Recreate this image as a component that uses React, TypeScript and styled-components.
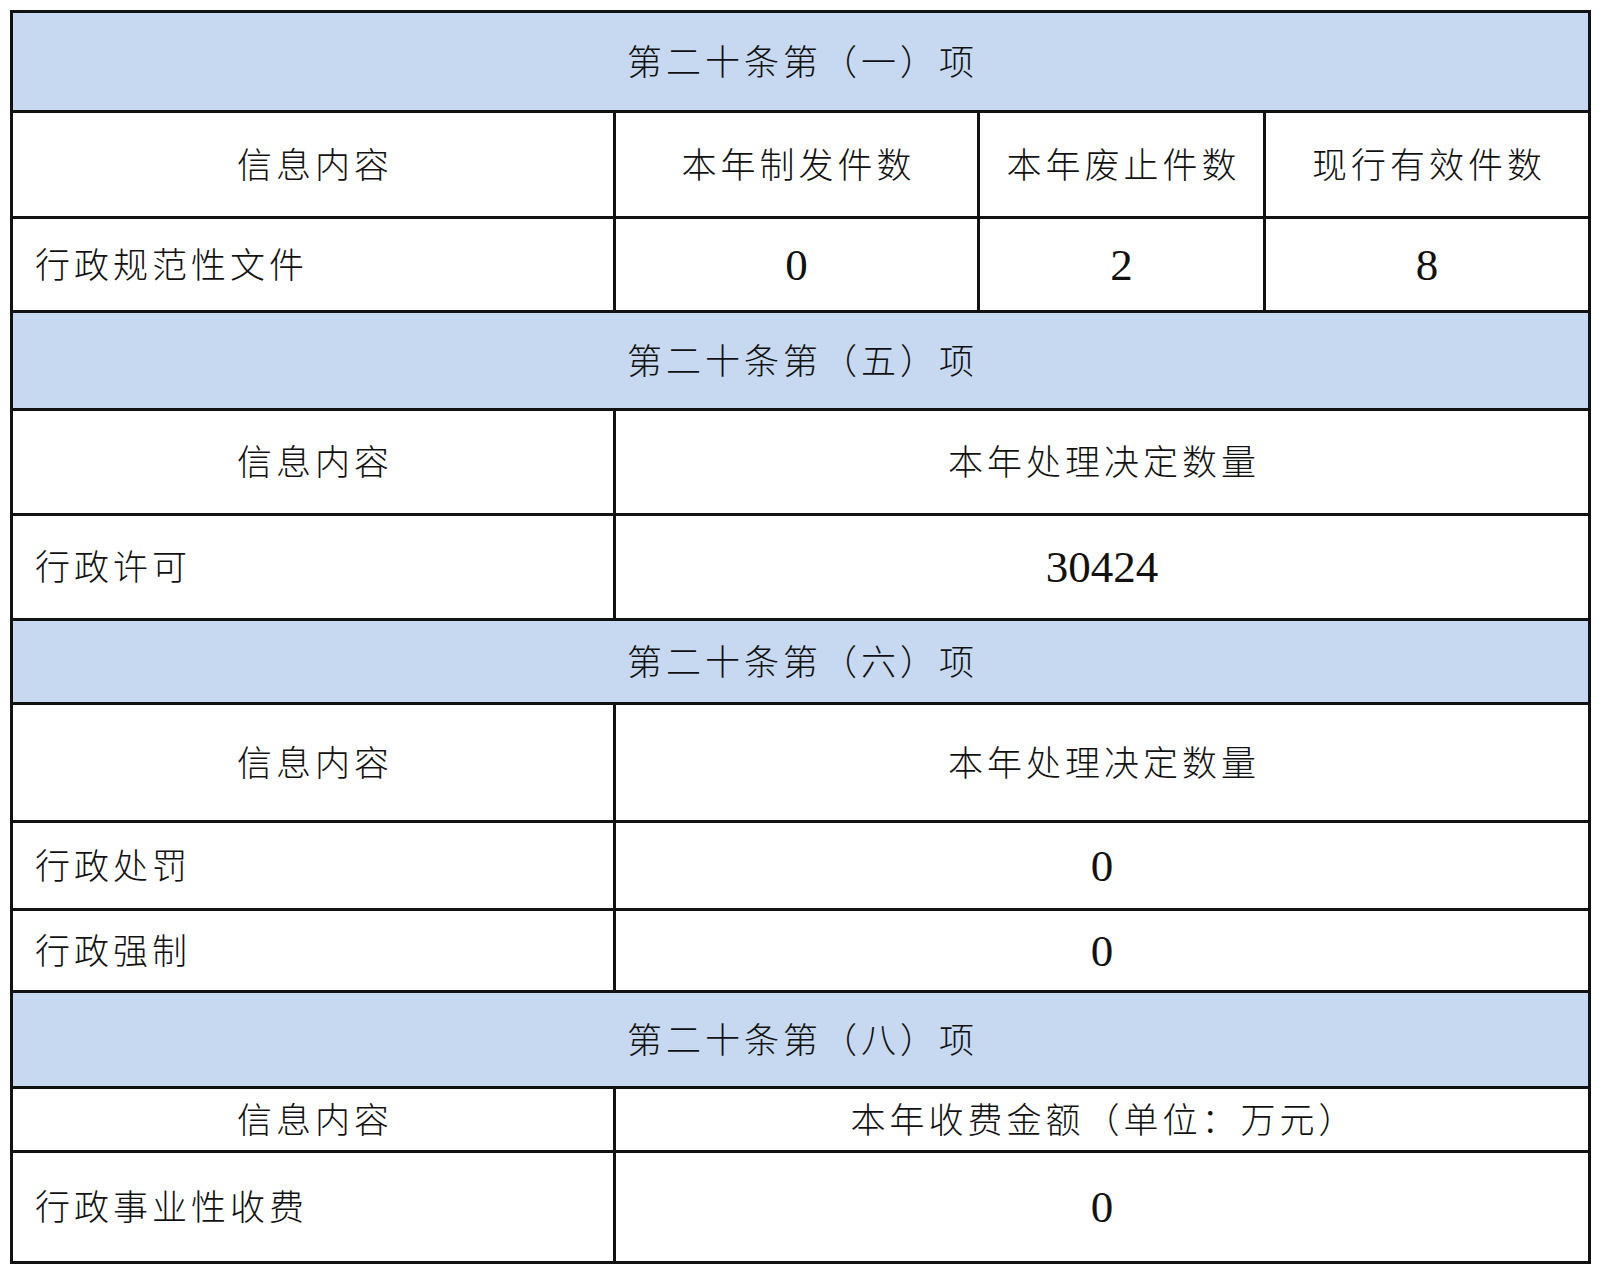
import styled, { createGlobalStyle } from 'styled-components';

type DataRow = { h: number; label: string; values: string[] };
type Section = {
  title: string;
  titleH: number;
  header: { h: number; cells: string[] };
  rows: DataRow[];
};

const sections: Section[] = [
  {
    title: '第二十条第（一）项',
    titleH: 97,
    header: { h: 103, cells: ['信息内容', '本年制发件数', '本年废止件数', '现行有效件数'] },
    rows: [{ h: 91, label: '行政规范性文件', values: ['0', '2', '8'] }],
  },
  {
    title: '第二十条第（五）项',
    titleH: 95,
    header: { h: 102, cells: ['信息内容', '本年处理决定数量'] },
    rows: [{ h: 102, label: '行政许可', values: ['30424'] }],
  },
  {
    title: '第二十条第（六）项',
    titleH: 81,
    header: { h: 115, cells: ['信息内容', '本年处理决定数量'] },
    rows: [
      { h: 85, label: '行政处罚', values: ['0'] },
      { h: 79, label: '行政强制', values: ['0'] },
    ],
  },
  {
    title: '第二十条第（八）项',
    titleH: 93,
    header: { h: 61, cells: ['信息内容', '本年收费金额（单位：万元）'] },
    rows: [{ h: 108, label: '行政事业性收费', values: ['0'] }],
  },
];

// row heights in order, used for the grid template
const rowHeights = sections
  .flatMap((s) => [s.titleH, s.header.h, ...s.rows.map((r) => r.h)])
  .map((h) => `${h}px`)
  .join(' ');

function App() {
  return (
    <Page>
      <GlobalStyle />
      <Table $rows={rowHeights}>
        {sections.map((s) => (
          <Block key={s.title}>
            <TitleCell>{s.title}</TitleCell>
            {s.header.cells.map((c, i) => (
              <Cell key={c + i} $span={s.header.cells.length === 2 && i === 1 ? 3 : 1}>
                {c}
              </Cell>
            ))}
            {s.rows.map((r) => (
              <Block key={r.label}>
                <LabelCell>{r.label}</LabelCell>
                {r.values.map((v, i) => (
                  <NumCell key={i} $span={r.values.length === 1 ? 3 : 1}>
                    {v}
                  </NumCell>
                ))}
              </Block>
            ))}
          </Block>
        ))}
      </Table>
    </Page>
  );
}

export default App;

const GlobalStyle = createGlobalStyle`
  html, body {
    margin: 0;
    padding: 0;
    background: #ffffff;
  }
`;

const Page = styled.div`
  padding: 10px;
  font-family: "Liberation Serif", "Noto Sans CJK SC", serif;
  color: #111;
`;

const Table = styled.div<{ $rows: string }>`
  display: grid;
  grid-template-columns: 600px 361px 283px 322px;
  grid-template-rows: ${(p) => p.$rows};
  gap: 3px;
  padding: 3px;
  width: max-content;
  background: #121212;
`;

const Block = styled.div`
  display: contents;
`;

const Cell = styled.div<{ $span?: number }>`
  grid-column: span ${(p) => p.$span ?? 1};
  display: flex;
  align-items: center;
  justify-content: center;
  padding-bottom: 5px;
  background: #ffffff;
  font-size: 35px;
  font-weight: 300;
  letter-spacing: 4px;
  text-indent: 4px;
  white-space: nowrap;
`;

const TitleCell = styled(Cell)`
  grid-column: 1 / -1;
  background: #c6d9f0;
`;

const LabelCell = styled(Cell)`
  justify-content: flex-start;
  padding-left: 22px;
  text-indent: 0;
`;

const NumCell = styled(Cell)`
  padding-bottom: 0;
  font-size: 45px;
  font-weight: 400;
  letter-spacing: 0;
  text-indent: 0;
`;
